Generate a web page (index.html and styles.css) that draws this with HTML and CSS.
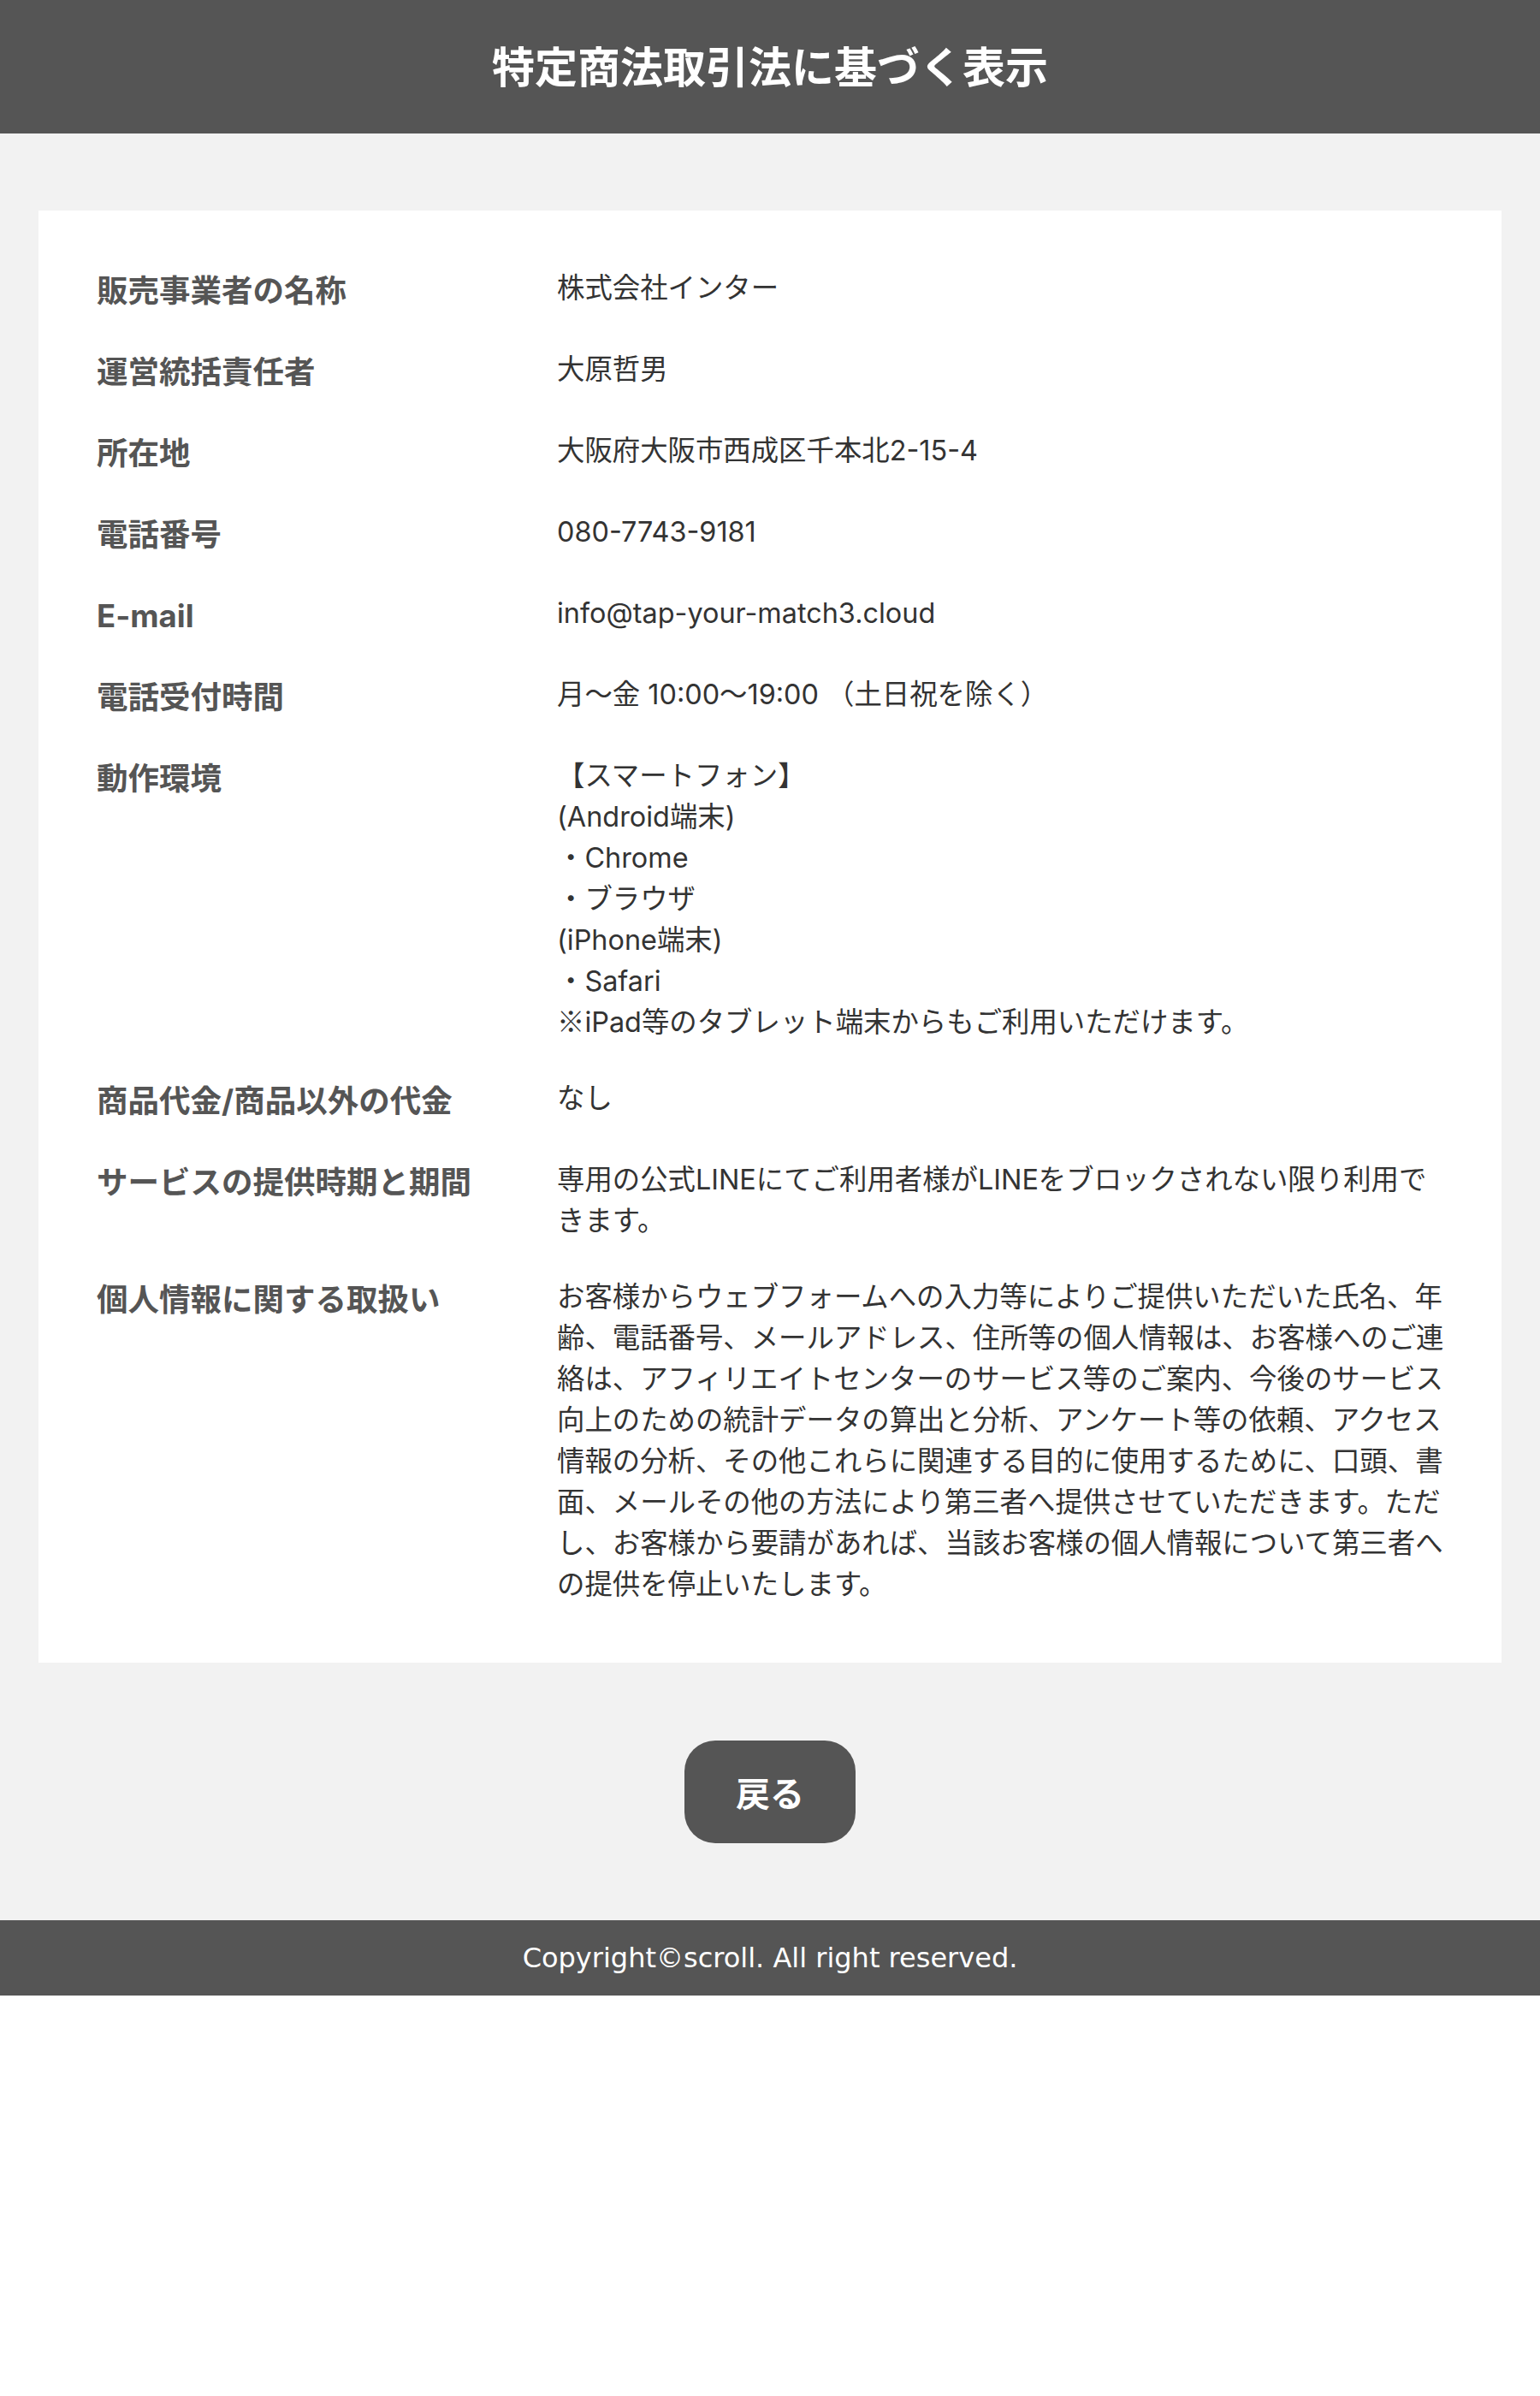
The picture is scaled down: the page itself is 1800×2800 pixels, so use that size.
FILE: index.html
```html
<!DOCTYPE html>
<html lang="ja">
<head>
<meta charset="utf-8">
<title>特定商法取引法に基づく表示</title>
<link rel="stylesheet" href="styles.css">
</head>
<body>
<header class="site-header">
  <h1 class="site-title">特定商法取引法に基づく表示</h1>
</header>
<main class="main">
  <section class="card">
    <dl class="info">
      <div class="row"><dt>販売事業者の名称</dt><dd>株式会社インター</dd></div>
      <div class="row"><dt>運営統括責任者</dt><dd>大原哲男</dd></div>
      <div class="row"><dt>所在地</dt><dd>大阪府大阪市西成区千本北2-15-4</dd></div>
      <div class="row"><dt>電話番号</dt><dd>080-7743-9181</dd></div>
      <div class="row"><dt>E-mail</dt><dd>info@tap-your-match3.cloud</dd></div>
      <div class="row"><dt>電話受付時間</dt><dd>月〜金 10:00〜19:00 （土日祝を除く）</dd></div>
      <div class="row"><dt>動作環境</dt><dd>【スマートフォン】<br>(Android端末)<br>・Chrome<br>・ブラウザ<br>(iPhone端末)<br>・Safari<br><span class="cjk">※</span>iPad等のタブレット端末からもご利用いただけます。</dd></div>
      <div class="row"><dt>商品代金/商品以外の代金</dt><dd>なし</dd></div>
      <div class="row"><dt>サービスの提供時期と期間</dt><dd>専用の公式LINEにてご利用者様がLINEをブロックされない限り利用できます。</dd></div>
      <div class="row"><dt>個人情報に関する取扱い</dt><dd>お客様からウェブフォームへの入力等によりご提供いただいた氏名、年齢、電話番号、メールアドレス、住所等の個人情報は、お客様へのご連絡は、アフィリエイトセンターのサービス等のご案内、今後のサービス向上のための統計データの算出と分析、アンケート等の依頼、アクセス情報の分析、その他これらに関連する目的に使用するために、口頭、書面、メールその他の方法により第三者へ提供させていただきます。ただし、お客様から要請があれば、当該お客様の個人情報について第三者への提供を停止いたします。</dd></div>
    </dl>
  </section>
  <div class="back">
    <a class="back-btn" href="#">戻る</a>
  </div>
</main>
<footer class="site-footer">
  <p class="copyright">Copyright©scroll. All right reserved.</p>
</footer>
</body>
</html>
```

FILE: styles.css
```css
* { box-sizing: border-box; }
html, body {
  margin: 0;
  padding: 0;
  background: #ffffff;
}
body {
  font-family: "Inter", "Noto Sans CJK JP", sans-serif;
  color: #333333;
}
.cjk {
  font-family: "Noto Sans CJK JP", sans-serif;
  line-height: 0;
}
.site-header {
  background: #555555;
  height: 156px;
  display: flex;
  align-items: center;
  justify-content: center;
}
.site-title {
  margin: 0 0 6px;
  color: #ffffff;
  font-family: "Noto Sans CJK JP", sans-serif;
  font-size: 50px;
  font-weight: 700;
  line-height: 1;
}
.main {
  background: #f2f2f2;
  padding: 90px 0 90px;
}
.card {
  width: 1710px;
  margin: 0 auto;
  background: #ffffff;
  padding: 67px 62px 67px 68px;
}
.info {
  margin: 0;
  display: flex;
  flex-direction: column;
  gap: 41px;
}
.row {
  display: grid;
  grid-template-columns: 538px 1fr;
  align-items: start;
}
.row dt {
  font-size: 36.5px;
  line-height: 54px;
  font-weight: 700;
  color: #555555;
}
.row dd {
  margin: 0;
  font-size: 32.4px;
  line-height: 48px;
  color: #333333;
}
.back {
  display: flex;
  justify-content: center;
  margin-top: 91px;
}
.back-btn {
  display: flex;
  align-items: center;
  justify-content: center;
  width: 200px;
  height: 120px;
  border-radius: 36px;
  background: #555555;
  color: #ffffff;
  font-family: "Noto Sans CJK JP", sans-serif;
  font-size: 40px;
  font-weight: 700;
  text-decoration: none;
}
.site-footer {
  background: #555555;
  height: 88px;
  display: flex;
  align-items: center;
  justify-content: center;
}
.copyright {
  margin: 0;
  color: #ffffff;
  font-family: "DejaVu Sans", sans-serif;
  font-size: 32px;
}
```
